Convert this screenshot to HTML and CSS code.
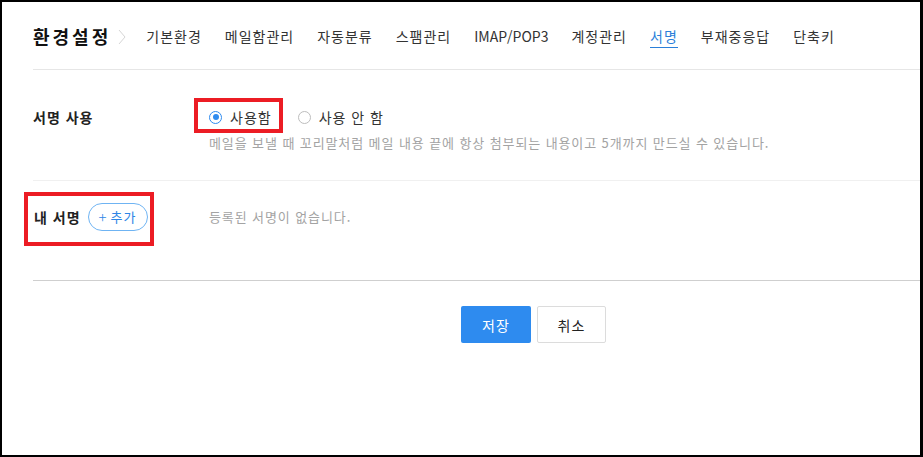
FILE: index.html
```html
<!DOCTYPE html>
<html lang="ko">
<head>
    <meta charset="UTF-8">
    <title>환경설정 - 서명</title>
    <link rel="stylesheet" href="styles.css">
</head>
<body>
<div class='frame'>
    <div class='setting'>
        <div class='settingHead'>
            <h1 class='title'>환경설정</h1>
            <svg class='crumb' width="8" height="16" viewBox="0 0 8 16"><polyline points="1,1 7,8 1,15" fill="none" stroke="#d6d6d6" stroke-width="1"/></svg>
            <ul class='tabList'>
                <li>기본환경</li>
                <li>메일함관리</li>
                <li>자동분류</li>
                <li>스팸관리</li>
                <li class='latin'>IMAP/POP3</li>
                <li>계정관리</li>
                <li class='on'>서명</li>
                <li>부재중응답</li>
                <li>단축키</li>
            </ul>
        </div>

        <div class='row rowUse'>
            <div class='rowLabel'>서명 사용</div>
            <div class='rowBody'>
                <div class='radioLine'>
                    <label class='radio checked'><i></i>사용함</label>
                    <label class='radio'><i></i>사용 안 함</label>
                    <span class='mark markUse'></span>
                </div>
                <p class='desc'>메일을 보낼 때 꼬리말처럼 메일 내용 끝에 항상 첨부되는 내용이고 5개까지 만드실 수 있습니다.</p>
            </div>
        </div>

        <div class='row rowList'>
            <div class='rowLabel'>
                <span class='labelGroup'>
                    내 서명
                    <a href="javascript:;" class='btnAdd'><span class='plus'>+</span>추가</a>
                    <span class='mark markAdd'></span>
                </span>
            </div>
            <div class='rowBody'>
                <p class='empty'>등록된 서명이 없습니다.</p>
            </div>
        </div>

        <div class='btnArea'>
            <a href="javascript:;" class='btn btnSave'>저장</a>
            <a href="javascript:;" class='btn btnCancel'>취소</a>
        </div>
    </div>
</div>
</body>
</html>
```

FILE: styles.css
```css
*{
    margin:0;
    padding:0;
    box-sizing:border-box;
}
ul,li{
    list-style:none;
}
a{
    text-decoration:none;
}
body{
    font-family:"Noto Sans CJK KR","Noto Sans",sans-serif;
    color:#333;
    background:#fff;
}
.frame{
    width:923px;
    height:457px;
    border-style:solid;
    border-color:#000;
    border-width:2px 3px 2px 2px;
    overflow:hidden;
}
.setting{
    padding-left:31px;
}

/* 상단 탭 */
.settingHead{
    display:flex;
    align-items:flex-start;
    height:68px;
    padding-top:20px;
    border-bottom:1px solid #e6e6e6;
}
.settingHead .title{
    font-size:18px;
    font-weight:bold;
    color:#111;
    letter-spacing:3px;
    line-height:28px;
}
.settingHead .crumb{
    margin-left:7px;
    margin-top:7px;
}
.tabList{
    display:flex;
    gap:23px;
    margin-left:20px;
}
.tabList li{
    font-size:14px;
    line-height:28px;
    letter-spacing:1px;
    color:#333;
    cursor:pointer;
}
.tabList li.latin{
    letter-spacing:0;
}
.tabList li.on{
    color:#2b7fd9;
    box-shadow:inset 0 -2px 0 #fff,inset 0 -3px 0 #2b7fd9;
}

/* 설정 행 */
.row{
    display:flex;
    border-bottom:1px solid #f0f0f0;
}
.rowLabel{
    width:176px;
    flex-shrink:0;
    font-size:14px;
    font-weight:bold;
    letter-spacing:1px;
    color:#222;
}
.rowBody{
    flex:1;
}
.rowUse{
    padding:37px 0 28px;
}
.rowUse .rowLabel{
    line-height:20px;
}
.radioLine{
    position:relative;
    display:flex;
    align-items:center;
    height:20px;
    gap:26px;
}
.radio{
    display:flex;
    align-items:center;
    font-size:14px;
    letter-spacing:1px;
    color:#333;
    cursor:pointer;
}
.radio i{
    width:13px;
    height:13px;
    margin-right:8px;
    border:1px solid #bdbdbd;
    border-radius:50%;
    position:relative;
}
.radio.checked i{
    border-color:#2e8bef;
}
.radio.checked i:after{
    content:"";
    position:absolute;
    left:2.5px;
    top:2.5px;
    width:6px;
    height:6px;
    border-radius:50%;
    background:#2e8bef;
}
.desc{
    margin-top:7px;
    font-size:13px;
    line-height:18px;
    letter-spacing:0.9px;
    color:#a3a3a3;
}

.rowList{
    padding:22px 0 49px;
    border-bottom-color:#cfcfcf;
}
.rowList .rowLabel{
    line-height:28px;
}
.labelGroup{
    position:relative;
    display:inline-flex;
    align-items:center;
    gap:7px;
    padding-left:1px;
}
.btnAdd{
    display:inline-flex;
    align-items:center;
    justify-content:center;
    width:60px;
    height:28px;
    border:1px solid #6fb4f3;
    border-radius:14px;
    font-size:13px;
    font-weight:normal;
    letter-spacing:1px;
    color:#2e86e6;
}
.btnAdd .plus{
    font-size:15px;
    margin-right:3px;
    font-weight:300;
}
.empty{
    font-size:13px;
    line-height:28px;
    letter-spacing:0.9px;
    color:#a3a3a3;
}

/* 빨간 표시 박스 */
.mark{
    position:absolute;
    border:4px solid #ec1c24;
    pointer-events:none;
}
.markUse{
    left:-15px;
    top:-9px;
    width:89px;
    height:35px;
}
.markAdd{
    left:-9px;
    top:-11px;
    width:130px;
    height:54px;
}

/* 버튼 */
.btnArea{
    display:flex;
    gap:6px;
    padding:25px 0 0 428px;
}
.btn{
    display:flex;
    align-items:center;
    justify-content:center;
    width:70px;
    height:37px;
    border-radius:2px;
    font-size:14px;
    letter-spacing:1px;
}
.btnSave{
    background:#2e8bef;
    color:#fff;
}
.btnCancel{
    width:69px;
    border:1px solid #dcdcdc;
    color:#222;
}
```
